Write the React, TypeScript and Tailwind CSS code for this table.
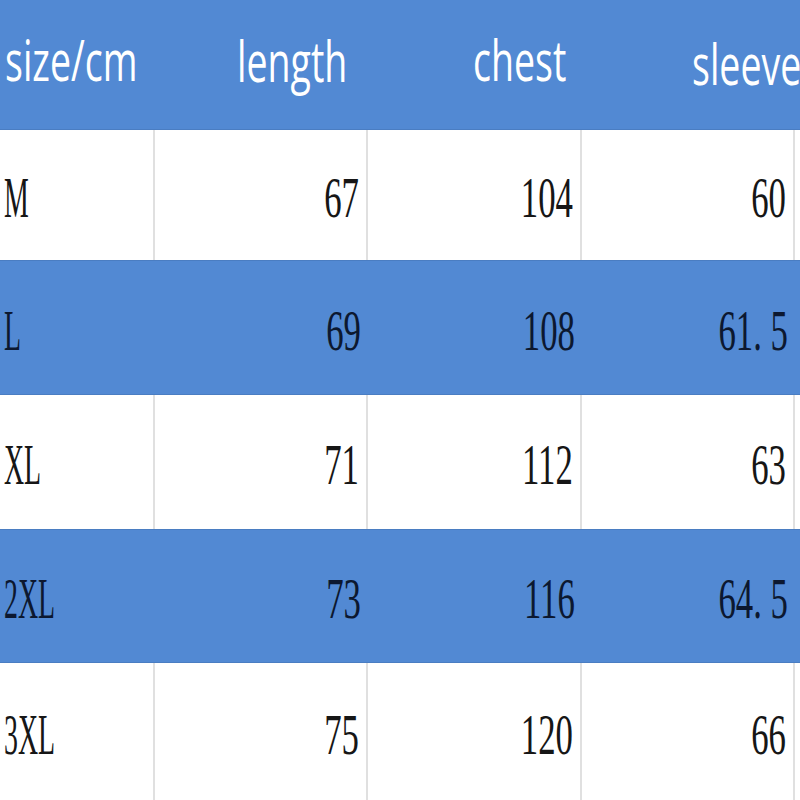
import React from "react";

type Row = { s: string; v: string[]; blue: boolean; h: string };

const rows: Row[] = [
  { s: "M", v: ["67", "104", "60"], blue: false, h: "h-[130px]" },
  { s: "L", v: ["69", "108", "61.5"], blue: true, h: "h-[135px]" },
  { s: "XL", v: ["71", "112", "63"], blue: false, h: "h-[134px]" },
  { s: "2XL", v: ["73", "116", "64.5"], blue: true, h: "h-[134px]" },
  { s: "3XL", v: ["75", "120", "66"], blue: false, h: "h-[137px]" },
];

function Num({ t }: { t: string }) {
  const parts = t.split(".");
  if (parts.length === 1) return <>{t}</>;
  return (
    <>
      {parts[0]}
      <span className="inline-block w-[0.5em] text-left">.</span>
      {parts[1]}
    </>
  );
}

export default function App() {
  const widths = ["w-[155px]", "w-[213px]", "w-[214px]", "w-[213px]"];
  return (
    <div className="w-[800px] h-[800px] overflow-hidden bg-white flex flex-col">
      {/* header */}
      <div
        className="h-[130px] shrink-0 bg-[#5289d3] border-b border-[#4a7dc2] flex text-white whitespace-nowrap"
        style={{ fontFamily: '"Open Sans", "Noto Sans", sans-serif' }}
      >
        <div className="w-[155px] shrink-0 flex items-center pl-[5px] pb-[12px]">
          <span className="inline-block origin-left scale-x-[0.67] text-[56px] leading-none">size/cm</span>
        </div>
        <div className="w-[213px] shrink-0 flex items-center pl-[82px] pb-[10px]">
          <span className="inline-block origin-left scale-x-[0.67] text-[56px] leading-none">length</span>
        </div>
        <div className="w-[214px] shrink-0 flex items-center pl-[105px] pb-[12px]">
          <span className="inline-block origin-left scale-x-[0.67] text-[56px] leading-none">chest</span>
        </div>
        <div className="w-[213px] shrink-0 flex items-center pl-[110px] pb-[4px]">
          <span className="inline-block origin-left scale-x-[0.67] text-[56px] leading-none">sleeve</span>
        </div>
        <div className="flex-1" />
      </div>

      {rows.map((r, i) => (
        <div
          key={i}
          className={`${r.h} shrink-0 flex ${r.blue ? "bg-[#5289d3] border-y border-[#4a7dc2] text-[#0c1830]" : "bg-white text-[#161616]"}`}
          style={{ fontFamily: '"Liberation Serif", "DejaVu Serif", serif' }}
        >
          <div
            className={`${widths[0]} shrink-0 flex items-center pl-[4px] pt-[6px] ${r.blue ? "" : "border-r-2 border-[#e0e0e0]"}`}
          >
            <span className="inline-block origin-left scale-x-[0.48] text-[58px] leading-none">{r.s}</span>
          </div>
          {r.v.map((v, j) => (
            <div
              key={j}
              className={`${widths[j + 1]} shrink-0 flex items-center justify-end pr-[7px] pt-[6px] ${r.blue ? "" : "border-r-2 border-[#e0e0e0]"}`}
            >
              <span className="inline-block origin-right scale-x-[0.6] text-[58px] leading-none whitespace-nowrap">
                <Num t={v} />
              </span>
            </div>
          ))}
          <div className="flex-1" />
        </div>
      ))}
    </div>
  );
}
